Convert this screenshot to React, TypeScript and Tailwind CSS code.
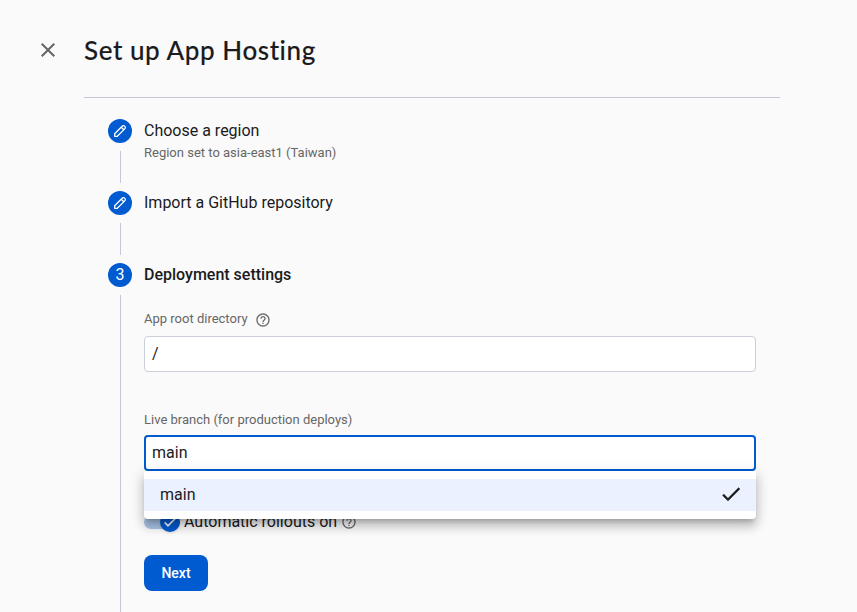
import type { ReactNode } from "react";

function HelpIcon({ className = "" }: { className?: string }) {
  return (
    <svg viewBox="0 0 24 24" className={`size-4 shrink-0 fill-[#6b6b6b] ${className}`}>
      <path d="M11 18h2v-2h-2v2zm1-16C6.48 2 2 6.48 2 12s4.48 10 10 10 10-4.48 10-10S17.52 2 12 2zm0 18c-4.41 0-8-3.59-8-8s3.59-8 8-8 8 3.59 8 8-3.59 8-8 8zm0-14c-2.21 0-4 1.79-4 4h2c0-1.1.9-2 2-2s2 .9 2 2c0 2-3 1.75-3 5h2c0-2.25 3-2.5 3-5 0-2.21-1.79-4-4-4z" />
    </svg>
  );
}

function PencilIcon() {
  return (
    <svg viewBox="0 0 16 16" className="size-4 fill-none stroke-white stroke-[1.3]">
      <path
        d="M2.7 13.3v-2.6l7.7-7.7a1.4 1.4 0 0 1 2 0l.6.6a1.4 1.4 0 0 1 0 2L5.3 13.3H2.7zM9.2 4.2l2.6 2.6"
        strokeLinejoin="round"
      />
    </svg>
  );
}

function Step({
  badge,
  last = false,
  children,
}: {
  badge: ReactNode;
  last?: boolean;
  children: ReactNode;
}) {
  return (
    <li className={last ? "flex flex-1 gap-3" : "flex h-[72px] gap-3"}>
      <div className="flex w-6 flex-col items-center gap-2">
        <div className="flex size-6 shrink-0 items-center justify-center rounded-full bg-[#005bd0] text-base text-white">
          {badge}
        </div>
        <div className={last ? "ml-px w-px flex-1 bg-[#c5c7d2]" : "ml-px h-8 w-px bg-[#c5c7d2]"} />
      </div>
      <div className="flex-1">{children}</div>
    </li>
  );
}

export default function App() {
  return (
    <main className="flex h-screen flex-col overflow-hidden bg-[#fafafa] font-['Roboto',sans-serif] text-[#1b1b1d]">
      <header className="flex h-[98px] shrink-0 pl-9">
        <button aria-label="Close" className="mt-[38px] size-6">
          <svg viewBox="0 0 24 24" className="size-6 fill-[#666]">
            <path d="M19 6.41 17.59 5 12 10.59 6.41 5 5 6.41 10.59 12 5 17.59 6.41 19 12 13.41 17.59 19 19 17.59 13.41 12z" />
          </svg>
        </button>
        <div className="ml-6 w-[696px] border-b border-[#c7c8d5] pt-[34px]">
          <h1 className="font-['Lato',sans-serif] text-[26px] leading-8 font-medium tracking-[0.57px] whitespace-nowrap [-webkit-text-stroke:0.12px_#1b1b1d]">
            Set up App Hosting
          </h1>
        </div>
      </header>

      <ol className="ml-[108px] flex w-[648px] flex-1 flex-col pt-[21px]">
        <Step badge={<PencilIcon />}>
          <h2 className="text-base leading-6">Choose a region</h2>
          <p className="text-[13px] leading-5 text-[#666]">
            Region set to asia-east1 (Taiwan)
          </p>
        </Step>
        <Step badge={<PencilIcon />}>
          <h2 className="text-base leading-6">Import a GitHub repository</h2>
        </Step>
        <Step badge="3" last>
          <h2 className="text-base leading-6 font-medium">Deployment settings</h2>
          <label className="mt-[22px] flex h-5 items-center text-[13px] text-[#666]">
            App root directory
            <HelpIcon className="mt-0.5 ml-[7px]" />
          </label>
          <div className="mt-[7px] flex h-9 items-center rounded-[4px] border border-[#cacfd9] bg-white pl-[7px] text-base">
            /
          </div>
          <label className="mt-[38px] flex h-5 items-center text-[13px] text-[#666]">
            Live branch (for production deploys)
          </label>
          <div className="relative mt-[5px] flex h-9 items-center rounded-[4px] border-2 border-[#005bd0] bg-white pl-1.5 text-base">
            main
            <div className="absolute top-[34px] -right-0.5 -left-0.5 z-10 rounded-b-[4px] bg-white py-2 shadow-[0_5px_5px_-3px_rgba(0,0,0,0.2),0_8px_10px_1px_rgba(0,0,0,0.14),0_3px_14px_2px_rgba(0,0,0,0.12)]">
              <div className="flex h-8 items-center justify-between bg-[#ebf1fe] px-4 text-base">
                main
                <svg
                  viewBox="0 0 24 24"
                  className="-mr-[3px] mb-0.5 size-6 fill-[#1b1b1d] stroke-[#1b1b1d] stroke-[0.3]"
                >
                  <path d="M9 16.17 4.83 12l-1.42 1.41L9 19 21 7l-1.41-1.41z" />
                </svg>
              </div>
            </div>
          </div>
          <div className="mt-[39px] flex h-6 items-center">
            <div className="flex h-3.5 w-9 items-center justify-end rounded-full bg-[#aac5e9]">
              <div className="flex size-5 shrink-0 items-center justify-center rounded-full bg-[#005bd0] shadow-sm">
                <svg viewBox="0 0 24 24" className="size-4 fill-white stroke-white stroke-[0.5]">
                  <path d="M9 16.17 4.83 12l-1.42 1.41L9 19 21 7l-1.41-1.41z" />
                </svg>
              </div>
            </div>
            <span className="ml-1 text-base">Automatic rollouts on</span>
            <HelpIcon className="ml-1" />
          </div>
          <button className="mt-[21px] flex h-9 w-16 items-center justify-center rounded-lg bg-[#005bd0] text-sm font-medium text-white">
            Next
          </button>
        </Step>
      </ol>
    </main>
  );
}
